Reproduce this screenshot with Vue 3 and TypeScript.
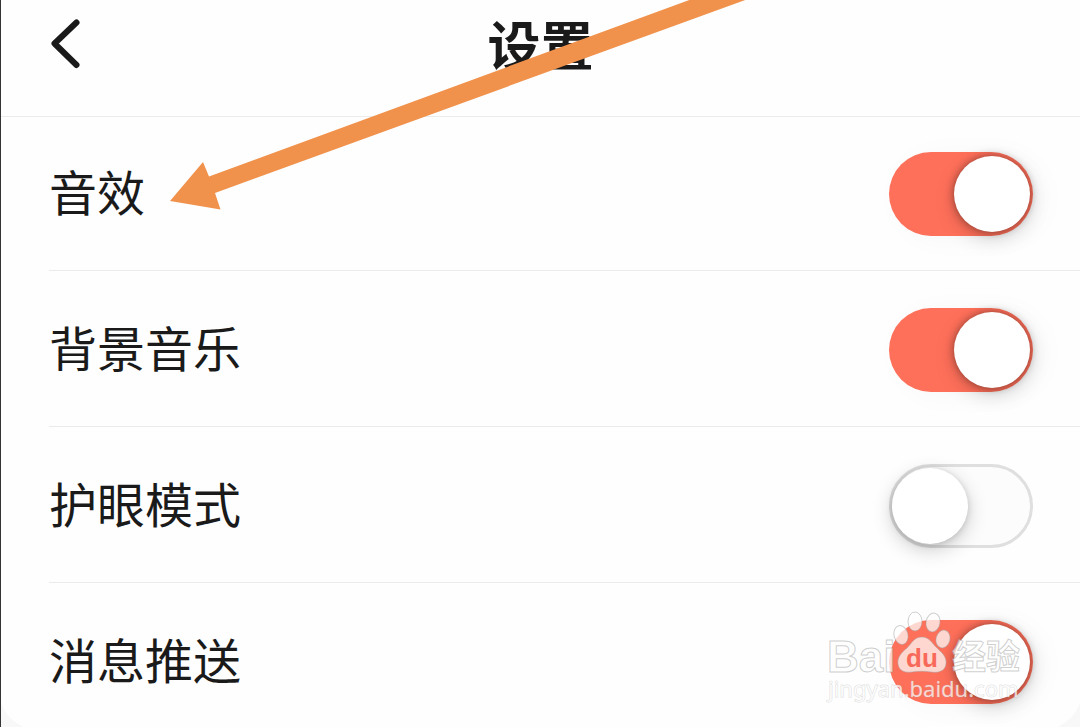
<script setup lang="ts">
import { ref } from 'vue'

interface Setting {
  id: string
  label: string
  on: boolean
}

const settings = ref<Setting[]>([
  { id: 'sound', label: '音效', on: true },
  { id: 'music', label: '背景音乐', on: true },
  { id: 'eye-care', label: '护眼模式', on: false },
  { id: 'push', label: '消息推送', on: true },
])
</script>

<template>
  <div class="page">
    <header class="header">
      <button class="back" type="button" aria-label="返回">
        <svg width="32" height="56" viewBox="0 0 32 56" aria-hidden="true">
          <path d="M27.500 6.500 L5.500 27.500 L27.500 49" />
        </svg>
      </button>
      <h1 class="title">设置</h1>
    </header>

    <main class="list">
      <div v-for="item in settings" :key="item.id" class="row">
        <label class="label" :for="item.id">{{ item.label }}</label>
        <input :id="item.id" v-model="item.on" class="switch" type="checkbox" role="switch" />
      </div>
    </main>

    <svg class="arrow" width="760" height="220" viewBox="0 0 760 220" aria-hidden="true">
      <path d="M170 201 L203 162 L209 176.500 L692 -1 L748 -1 L215 193 L220.500 209.500 Z" />
    </svg>

    <svg class="corner left" width="22" height="24" viewBox="0 0 22 24" aria-hidden="true">
      <path d="M0 0 Q5 15 22 24 H0 Z" />
    </svg>
    <svg class="corner right" width="22" height="24" viewBox="0 0 22 24" aria-hidden="true">
      <path d="M22 0 Q17 15 0 24 H22 Z" />
    </svg>

    <svg class="watermark" width="208" height="100" viewBox="0 0 208 100" aria-hidden="true">
      <g class="mark">
        <text class="brand" x="8" y="61">Bai</text>
        <ellipse cx="82" cy="24" rx="7" ry="9.500" transform="rotate(-14 82 24)" />
        <ellipse cx="96" cy="10.500" rx="7" ry="9.500" />
        <ellipse cx="114" cy="11.500" rx="7" ry="9.500" transform="rotate(10 114 11.500)" />
        <ellipse cx="124" cy="28" rx="7" ry="9" transform="rotate(14 124 28)" />
        <path d="M103 26 C110 26 113 32 117 36 C122 41 128 45 127 53 C126 61 118 62 112 61 C106 60 99 60 93 61 C86 62 80 60 79 53 C78 46 83 41 88 37 C93 32 95 26 103 26 Z" />
        <text class="cn" x="133" y="58">经验</text>
        <text class="url" x="9" y="86">jingyan.baidu.com</text>
      </g>
      <text class="du" x="87" y="56">du</text>
    </svg>
  </div>
</template>

<style>
body {
  margin: 0;
  background: #fefefe;
}
</style>

<style scoped>
.page {
  position: relative;
  box-sizing: border-box;
  height: 100vh;
  overflow: hidden;
  border-left: 1px solid #343434;
  background: #fefefe;
  color: #1a1a1a;
  font-family: "Noto Sans CJK SC", sans-serif;
}

.header {
  display: grid;
  grid-template-columns: 1fr auto 1fr;
  align-items: center;
  box-sizing: border-box;
  height: 117px;
  padding: 0 48px 28px;
  border-bottom: 1px solid #ebebeb;
}

.back {
  display: flex;
  width: 32px;
  height: 56px;
  padding: 0;
  border: 0;
  background: none;
  cursor: pointer;
}

.back path {
  fill: none;
  stroke: #1a1a1a;
  stroke-width: 6;
  stroke-linecap: round;
  stroke-linejoin: round;
}

.title {
  margin: 0;
  padding-bottom: 2px;
  font-size: 53px;
  line-height: 76px;
  font-weight: 700;
}

.list {
  padding-left: 48px;
}

.row {
  display: flex;
  align-items: flex-start;
  justify-content: space-between;
  padding: 37px 47px 34px 0;
  border-bottom: 1px solid #ebebeb;
}

.row:first-child {
  padding-top: 35px;
}

.row:last-child {
  border-bottom: 0;
}

.label {
  font-size: 48px;
  line-height: 76px;
}

.switch {
  appearance: none;
  position: relative;
  box-sizing: border-box;
  width: 144px;
  height: 84px;
  margin: 0;
  border: 3px solid #dfdfdf;
  border-radius: 42px;
  background: #fcfcfc;
  cursor: pointer;
}

.switch::before {
  content: "";
  position: absolute;
  top: 1px;
  left: 0;
  width: 76px;
  height: 76px;
  border-radius: 50%;
  background: #ffffff;
  box-shadow: 0 6px 20px rgba(0, 0, 0, 0.2), 0 1px 6px rgba(0, 0, 0, 0.15);
}

.switch:checked {
  border-color: transparent;
  background: #ff705a border-box;
  box-shadow: 10px 3px 30px rgba(0, 0, 0, 0.03);
}

.switch:checked::before {
  left: 62px;
  box-shadow: 0 6px 20px rgba(0, 0, 0, 0.18), 0 0 8px rgba(0, 0, 0, 0.4);
}

.arrow {
  position: absolute;
  top: 0;
  left: -1px;
  fill: #f0924c;
  pointer-events: none;
}

.corner {
  position: absolute;
  bottom: 0;
  fill: #f8f8f8;
}

.corner.left {
  left: 0;
}

.corner.right {
  right: 0;
}

.watermark {
  position: absolute;
  right: 53px;
  bottom: 16px;
  pointer-events: none;
}

.mark {
  fill: rgba(255, 255, 255, 0.72);
  stroke: rgba(160, 160, 160, 0.5);
  stroke-width: 1;
}

.brand {
  font: 700 44px "Liberation Sans", sans-serif;
}

.cn {
  font: 700 34px "Noto Sans CJK SC", sans-serif;
}

.mark .url {
  font: 400 22px "Noto Sans", sans-serif;
  stroke: rgba(160, 160, 160, 0.35);
  paint-order: stroke;
}

.du {
  fill: #f8695a;
  font: 700 26px "Liberation Sans", sans-serif;
}
</style>
